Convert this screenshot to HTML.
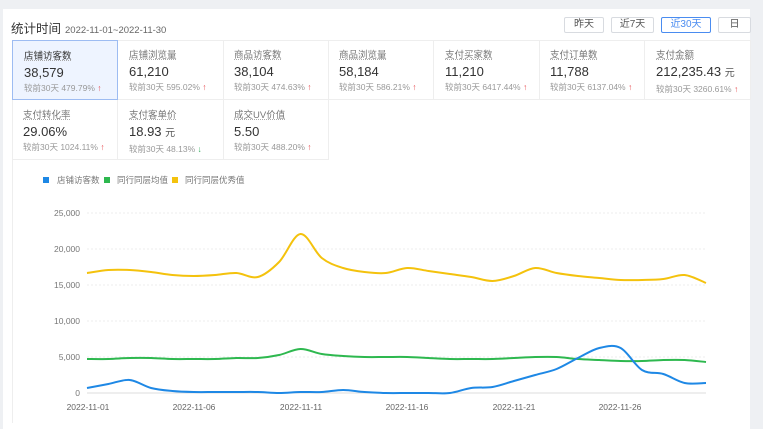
<!DOCTYPE html>
<html><head><meta charset="utf-8"><style>
*{margin:0;padding:0;box-sizing:border-box}
body{width:763px;height:423px;background:#eef0f3;font-family:"Liberation Sans","Noto Sans CJK SC",sans-serif;overflow:hidden;position:relative}
.panel{position:absolute;left:3px;top:9px;width:747px;height:420px;background:#fff}
.title{position:absolute;left:11px;top:18px;font-size:12.5px;color:#333}
.title span{font-size:9.5px;color:#666;margin-left:4px}
.btns{position:absolute;top:17px;left:564px;display:flex;gap:7px}
.btn{height:16px;border:1px solid #d8dbe0;border-radius:2px;font-size:10px;color:#555;text-align:center;line-height:14px;background:#fff}
.btn.on{border-color:#4a8cf0;color:#4a8cf0}
.card{position:absolute;width:106px;height:60px;border-right:1px solid #eee;border-bottom:1px solid #eee;padding:10px 0 0 11px}
.card.sel{background:#eef4ff;border:1px solid #9dbcf2}
.l{font-size:9.5px;color:#777;text-decoration:underline dotted #aaa;line-height:12px}
.card.sel .l{color:#333}
.v{font-size:13px;color:#333;line-height:17px;margin-top:1px}
.v small{font-size:10px;color:#555}
.c{font-size:8.5px;color:#999;line-height:12px;margin-top:1px}
.up{color:#e5484d;font-weight:bold}
.dn{color:#2eaa58;font-weight:bold}
</style></head><body>
<div class="panel"></div>
<div class="title">统计时间<span>2022-11-01~2022-11-30</span></div>
<div class="btns">
<div class="btn" style="width:40px">昨天</div>
<div class="btn" style="width:43px">近7天</div>
<div class="btn on" style="width:50px">近30天</div>
<div class="btn" style="width:33px">日</div>
</div>
<div style="position:absolute;left:12px;top:40px;width:738px;height:1px;background:#eee"></div>
<div style="position:absolute;left:12px;top:40px;width:1px;height:383px;background:#eee"></div>

<div class="card sel" style="left:12px;top:40px">
<div class="l">店铺访客数</div><div class="v">38,579</div><div class="c">较前30天 479.79% <span class="up">↑</span></div></div>
<div class="card" style="left:118px;top:40px">
<div class="l">店铺浏览量</div><div class="v">61,210</div><div class="c">较前30天 595.02% <span class="up">↑</span></div></div>
<div class="card" style="left:223px;top:40px">
<div class="l">商品访客数</div><div class="v">38,104</div><div class="c">较前30天 474.63% <span class="up">↑</span></div></div>
<div class="card" style="left:328px;top:40px">
<div class="l">商品浏览量</div><div class="v">58,184</div><div class="c">较前30天 586.21% <span class="up">↑</span></div></div>
<div class="card" style="left:434px;top:40px">
<div class="l">支付买家数</div><div class="v">11,210</div><div class="c">较前30天 6417.44% <span class="up">↑</span></div></div>
<div class="card" style="left:539px;top:40px">
<div class="l">支付订单数</div><div class="v">11,788</div><div class="c">较前30天 6137.04% <span class="up">↑</span></div></div>
<div class="card" style="left:645px;top:40px">
<div class="l">支付金额</div><div class="v">212,235.43 <small>元</small></div><div class="c">较前30天 3260.61% <span class="up">↑</span></div></div>
<div class="card" style="left:12px;top:100px">
<div class="l">支付转化率</div><div class="v">29.06%</div><div class="c">较前30天 1024.11% <span class="up">↑</span></div></div>
<div class="card" style="left:118px;top:100px">
<div class="l">支付客单价</div><div class="v">18.93 <small>元</small></div><div class="c">较前30天 48.13% <span class="dn">↓</span></div></div>
<div class="card" style="left:223px;top:100px">
<div class="l">成交UV价值</div><div class="v">5.50</div><div class="c">较前30天 488.20% <span class="up">↑</span></div></div>

<svg width="763" height="423" style="position:absolute;left:0;top:0" font-family="Liberation Sans,Noto Sans CJK SC,sans-serif">
<rect x="43" y="177" width="6" height="6" fill="#1e88e5"/><text x="57" y="183" font-size="8.5" fill="#777">店铺访客数</text>
<rect x="104" y="177" width="6" height="6" fill="#2eb84f"/><text x="117" y="183" font-size="8.5" fill="#777">同行同层均值</text>
<rect x="172" y="177" width="6" height="6" fill="#f4c20d"/><text x="185" y="183" font-size="8.5" fill="#777">同行同层优秀值</text>
<g stroke="#eee" stroke-dasharray="2,2">
<line x1="87" x2="706" y1="213" y2="213"/><line x1="87" x2="706" y1="249" y2="249"/><line x1="87" x2="706" y1="285" y2="285"/><line x1="87" x2="706" y1="321" y2="321"/><line x1="87" x2="706" y1="357" y2="357"/></g>
<line x1="87" x2="706" y1="393" y2="393" stroke="#ddd"/>
<g font-size="8.5" fill="#777" text-anchor="end">
<text x="80" y="216">25,000</text><text x="80" y="252">20,000</text><text x="80" y="288">15,000</text><text x="80" y="324">10,000</text><text x="80" y="360">5,000</text><text x="80" y="396">0</text></g>
<g font-size="8.5" fill="#666" text-anchor="middle">
<text x="88" y="410">2022-11-01</text><text x="194" y="410">2022-11-06</text><text x="301" y="410">2022-11-11</text><text x="407" y="410">2022-11-16</text><text x="514" y="410">2022-11-21</text><text x="620" y="410">2022-11-26</text></g>
<path id="py" fill="none" stroke="#f4c20d" stroke-width="2"/>
<path id="pg" fill="none" stroke="#2eb84f" stroke-width="2"/>
<path id="pb" fill="none" stroke="#1e88e5" stroke-width="2"/>
</svg>
<script>
function P(ys){var p=ys.map(function(y,i){return[87+i*619/29,y]});var d="M"+p[0][0]+","+p[0][1];
for(var i=0;i<p.length-1;i++){var a=p[i-1]||p[i],b=p[i],c=p[i+1],e=p[i+2]||c;
d+=" C"+(b[0]+(c[0]-a[0])/6)+","+(b[1]+(c[1]-a[1])/6)+" "+(c[0]-(e[0]-b[0])/6)+","+(c[1]-(e[1]-b[1])/6)+" "+c[0]+","+c[1];}return d;}
document.getElementById("py").setAttribute("d",P([273,270,270,272,275,276,275,276,273,276,262,234,258,268,272,273,268,271,274,277,281,276,268,273,276,278,280,280,279,275,283].slice(0,30).map(function(v,i,a){return v;})));
</script>
<script>
document.getElementById("py").setAttribute("d",P([273,270,270,272,275,276,275,273,277,262,234,258,268,272,273,268,271,274,277,281,276,268,273,276,278,280,280,279,275,283]));
document.getElementById("pg").setAttribute("d",P([359,359,358,358,359,359,359,358,358,355,349,354,356,357,357,357,358,359,359,359,358,357,357,359,360,361,361,360,360,362]));
document.getElementById("pb").setAttribute("d",P([388,384,380,388,391,392,392,392,392,393,392,392,390,392,393,393,393,393,388,387,381,375,369,358,348,348,370,374,383,383]));
</script>
</body></html>
